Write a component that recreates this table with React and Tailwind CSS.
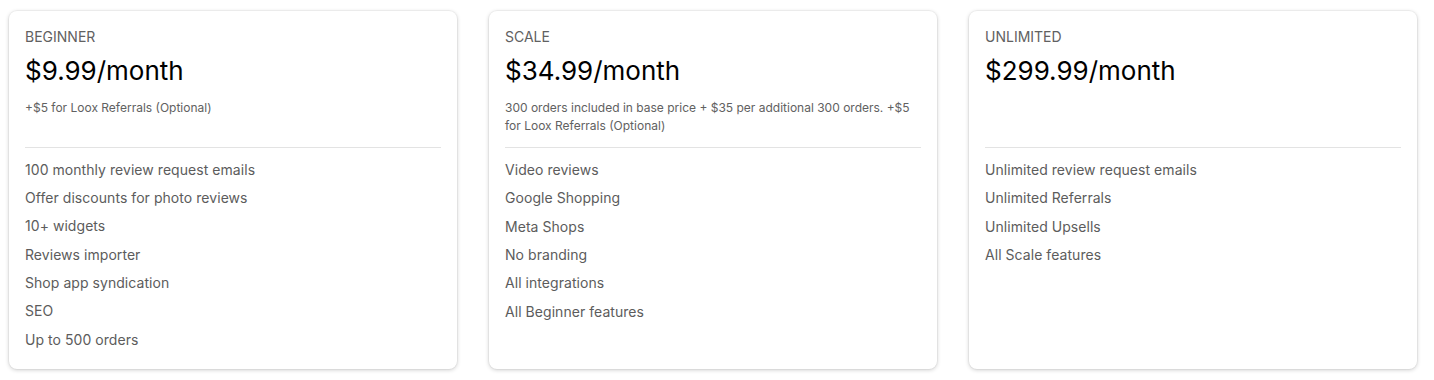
import React from "react";

const plans = [
  {
    name: "BEGINNER",
    price: "$9.99/month",
    note: "+$5 for Loox Referrals (Optional)",
    features: [
      "100 monthly review request emails",
      "Offer discounts for photo reviews",
      "10+ widgets",
      "Reviews importer",
      "Shop app syndication",
      "SEO",
      "Up to 500 orders",
    ],
  },
  {
    name: "SCALE",
    price: "$34.99/month",
    note: "300 orders included in base price + $35 per additional 300 orders. +$5 for Loox Referrals (Optional)",
    features: [
      "Video reviews",
      "Google Shopping",
      "Meta Shops",
      "No branding",
      "All integrations",
      "All Beginner features",
    ],
  },
  {
    name: "UNLIMITED",
    price: "$299.99/month",
    note: "",
    features: [
      "Unlimited review request emails",
      "Unlimited Referrals",
      "Unlimited Upsells",
      "All Scale features",
    ],
  },
];

export default function App() {
  return (
    <div
      className="w-[1434px] h-[380px] bg-white pl-[9px] pt-[11px] flex gap-8 items-stretch"
      style={{ fontFamily: "Inter, 'Noto Sans', sans-serif" }}
    >
      {plans.map((p) => (
        <div
          key={p.name}
          className="w-[448px] h-[358px] bg-white rounded-lg px-4 pt-4 pb-[19px] flex flex-col shadow-[0_1px_4px_rgba(0,0,0,0.2),0_0_0_1px_rgba(0,0,0,0.03)]"
        >
          <div className="text-[14px] leading-5 text-[#616161]">{p.name}</div>
          <div className="mt-2 text-[26px] leading-8 text-black">{p.price}</div>
          <div className="mt-3 min-h-[36px] text-[12px] leading-[18px] text-[#616161] pr-2">{p.note}</div>
          <div className="mt-3 h-px bg-[#e3e3e3]" />
          <ul className="mt-3 flex flex-col gap-2">
            {p.features.map((f) => (
              <li key={f} className="text-[14px] leading-[20.33px] text-[#5c5c5c] tracking-[0.05px]">
                {f}
              </li>
            ))}
          </ul>
        </div>
      ))}
    </div>
  );
}
